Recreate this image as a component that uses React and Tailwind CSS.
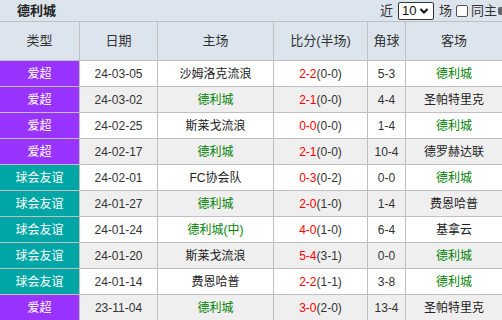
const rows = [
  { type: '爱超', date: '24-03-05', home: '沙姆洛克流浪', score: '2-2', half: '(0-0)', corner: '5-3', away: '德利城' },
  { type: '爱超', date: '24-03-02', home: '德利城', score: '2-1', half: '(0-0)', corner: '4-4', away: '圣帕特里克' },
  { type: '爱超', date: '24-02-25', home: '斯莱戈流浪', score: '0-0', half: '(0-0)', corner: '1-4', away: '德利城' },
  { type: '爱超', date: '24-02-17', home: '德利城', score: '2-1', half: '(0-0)', corner: '10-4', away: '德罗赫达联' },
  { type: '球会友谊', date: '24-02-01', home: 'FC协会队', score: '0-3', half: '(0-2)', corner: '0-0', away: '德利城' },
  { type: '球会友谊', date: '24-01-27', home: '德利城', score: '2-0', half: '(1-0)', corner: '1-4', away: '费恩哈普' },
  { type: '球会友谊', date: '24-01-24', home: '德利城(中)', score: '4-0', half: '(1-0)', corner: '6-4', away: '基拿云' },
  { type: '球会友谊', date: '24-01-20', home: '斯莱戈流浪', score: '5-4', half: '(3-1)', corner: '0-0', away: '德利城' },
  { type: '球会友谊', date: '24-01-14', home: '费恩哈普', score: '2-2', half: '(1-1)', corner: '3-8', away: '德利城' },
  { type: '爱超', date: '23-11-04', home: '德利城', score: '3-0', half: '(2-0)', corner: '13-4', away: '圣帕特里克' },
]

const cols = 'grid grid-cols-[80px_78px_116px_94px_38px_1fr]'
const cell = 'flex items-center justify-center border-r border-[#c0c0c0] whitespace-nowrap'

function Team({ name }) {
  const ours = name.startsWith('德利城')
  return <span className={ours ? 'text-[#008000]' : 'text-[#222]'}>{name}</span>
}

export default function App() {
  return (
    <div className="w-[502px] h-[320px] overflow-hidden bg-white text-[12px] text-[#333]" style={{ fontFamily: '"Liberation Sans", "Noto Sans CJK SC", sans-serif' }}>
      <div className="h-[22px] flex items-center bg-[#dce4ee] border-b border-[#c0c0c0]">
        <div className="pl-[17px] font-bold text-[13px] text-[#222]">德利城</div>
        <div className="ml-auto flex items-center h-full text-[13px]">
          <span className="mr-[5px]">近</span>
          <div className="w-[36px] h-[18px] bg-white border border-[#333] rounded-[2px] flex items-center pl-[3px] text-[13px] text-[#111]">
            10
            <svg width="10" height="8" viewBox="0 0 10 8" className="ml-[3px]"><path d="M1.5 2 L5 5.5 L8.5 2" fill="none" stroke="#111" strokeWidth="2" /></svg>
          </div>
          <span className="ml-[5px]">场</span>
          <span className="ml-[4px] w-[12px] h-[12px] border border-[#555] rounded-[2px] bg-white" />
          <span className="ml-[3px]">同主</span>
          <span className="ml-[1px] w-[4px] h-[8px] bg-[#666] rounded-l-[2px]" />
        </div>
      </div>
      <div className={`${cols} h-[39px] bg-[#dce4ee] border-b border-[#c0c0c0] text-[13px] text-[#333]`}>
        <div className={cell}>类型</div>
        <div className={cell}>日期</div>
        <div className={cell}>主场</div>
        <div className={cell}>比分(半场)</div>
        <div className={cell}>角球</div>
        <div className={`${cell} border-r-0`}>客场</div>
      </div>
      {rows.map((r, i) => (
        <div key={i} className={`${cols} h-[26px] border-b border-[#c0c0c0] ${i % 2 ? 'bg-[#efefef]' : 'bg-white'}`}>
          <div className={`${cell} text-white ${r.type === '爱超' ? 'bg-[#9933ff]' : 'bg-[#00a6a6]'}`}>{r.type}</div>
          <div className={cell}>{r.date}</div>
          <div className={cell}><Team name={r.home} /></div>
          <div className={cell}><span className="text-[#ff0000]">{r.score}</span>{r.half}</div>
          <div className={cell}>{r.corner}</div>
          <div className={`${cell} border-r-0`}><Team name={r.away} /></div>
        </div>
      ))}
    </div>
  )
}
